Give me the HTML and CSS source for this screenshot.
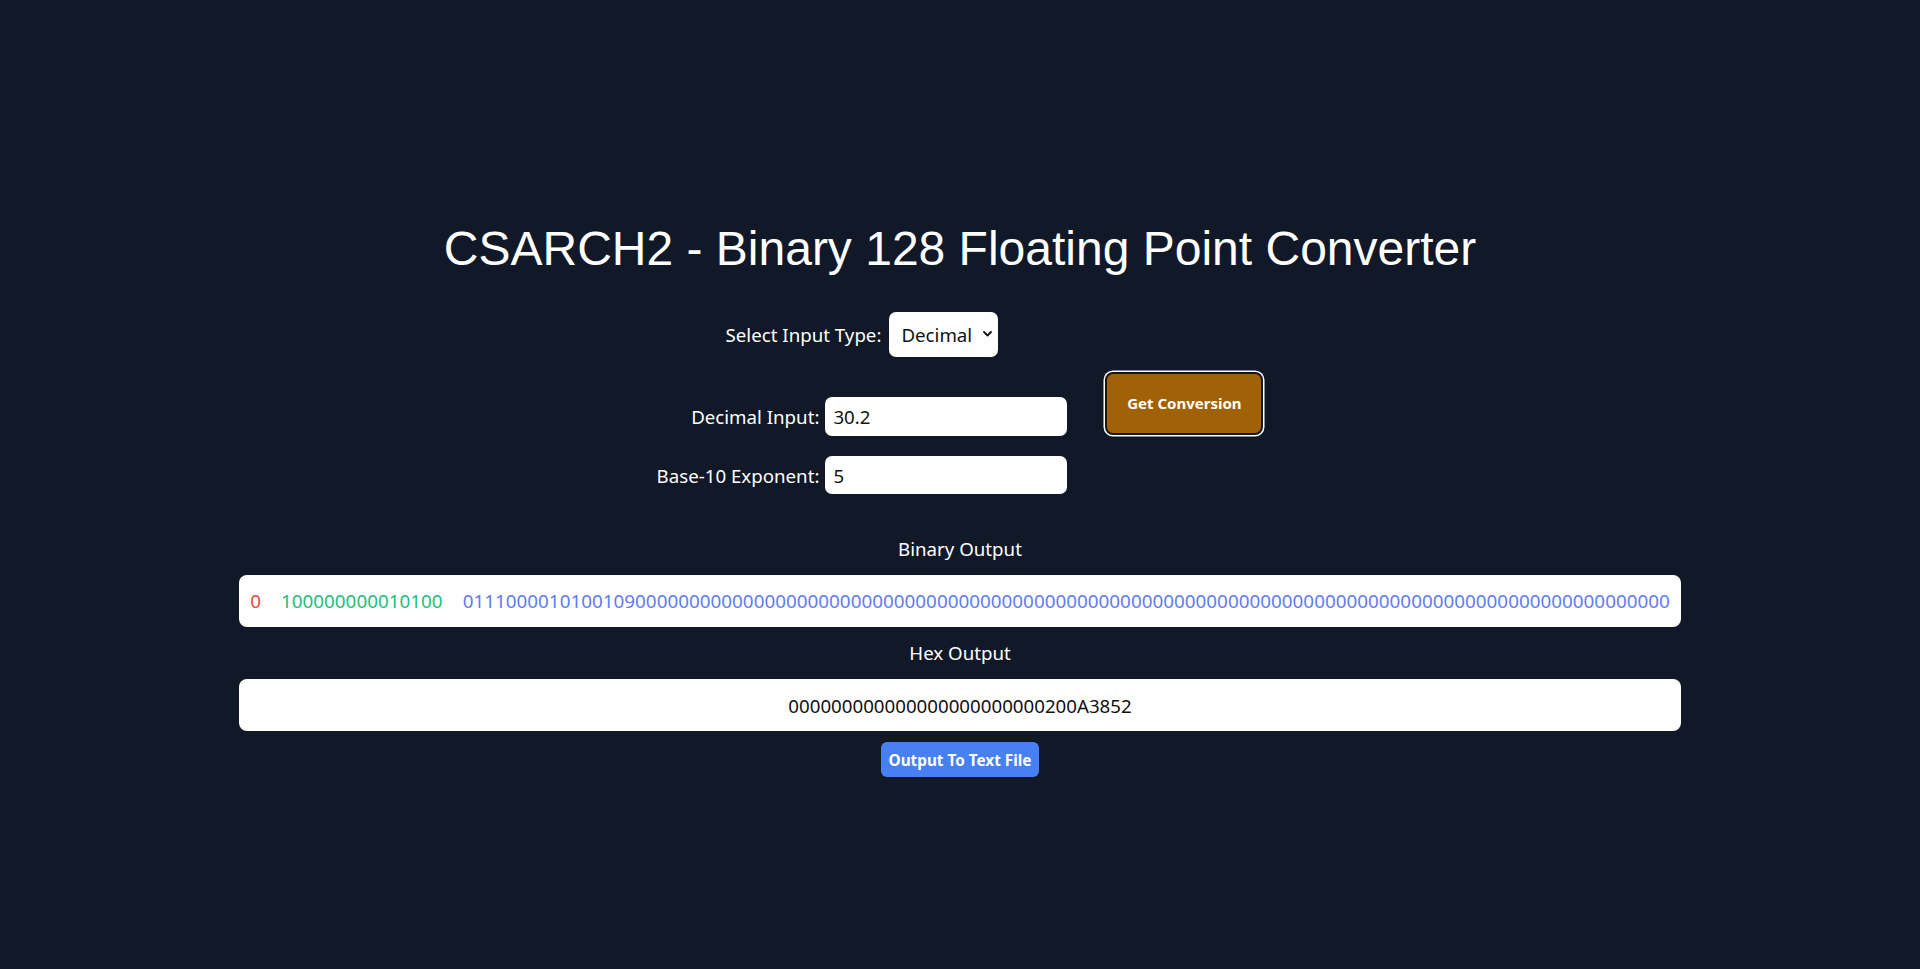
FILE: index.html
```html
<!DOCTYPE html>
<html lang="en">
<head>
<meta charset="utf-8">
<title>CSARCH2 - Binary 128 Floating Point Converter</title>
<link rel="stylesheet" href="styles.css">
</head>
<body>
<main class="page">
  <h1 class="title">CSARCH2 - Binary 128 Floating Point Converter</h1>
  <div class="controls">
    <div class="fields">
      <div class="type-row">
        <label class="field-label" for="type">Select Input Type:</label>
        <div class="select-wrap">
          <select id="type" class="type-select">
            <option>Decimal</option>
            <option>Binary</option>
          </select>
          <svg class="chevron" width="9" height="6" viewBox="0 0 9 6"><path d="M1 1l3.5 3.5L8 1" fill="none" stroke="#111" stroke-width="1.8" stroke-linecap="round" stroke-linejoin="round"/></svg>
        </div>
      </div>
      <div class="input-grid">
        <label class="field-label" for="dec">Decimal Input:</label>
        <input id="dec" class="text-input" type="text" value="30.2">
        <label class="field-label" for="exp">Base-10 Exponent:</label>
        <input id="exp" class="text-input short" type="text" value="5">
      </div>
    </div>
    <button class="convert">Get Conversion</button>
  </div>
  <section class="outputs">
    <div class="out-label">Binary Output</div>
    <div class="out-box binary"><span class="sign">0</span><span class="expo">100000000010100</span><span class="mant">0111000010100109000000000000000000000000000000000000000000000000000000000000000000000000000000000000000000000000</span></div>
    <div class="out-label">Hex Output</div>
    <div class="out-box hex">000000000000000000000000200A3852</div>
    <button class="export">Output To Text File</button>
  </section>
</main>
</body>
</html>
```
FILE: styles.css
```css
* { box-sizing: border-box; }
html, body { margin: 0; padding: 0; }
body {
  background: #111827;
  color: #ffffff;
  font-family: "Noto Sans", "Open Sans", sans-serif;
  min-height: 969px;
}
.page {
  display: flex;
  flex-direction: column;
  align-items: center;
  padding-top: 225px;
}
.title {
  margin: 0;
  font-family: "Liberation Sans", Arial, sans-serif;
  font-weight: 400;
  font-size: 48px;
  line-height: 48px;
  color: #ffffff;
}
.controls {
  margin-top: 39px;
  display: flex;
  align-items: center;
  gap: 38px;
}
.fields {
  display: flex;
  flex-direction: column;
  align-items: center;
  gap: 40px;
}
.type-row {
  display: flex;
  align-items: center;
  gap: 8px;
}
.field-label {
  font-size: 18.7px;
  color: #ffffff;
}
.select-wrap {
  position: relative;
}
.type-select {
  appearance: none;
  -webkit-appearance: none;
  display: block;
  width: 109px;
  height: 45px;
  border: none;
  border-radius: 7px;
  background: #ffffff;
  color: #111111;
  font-family: "Noto Sans", sans-serif;
  font-size: 18.7px;
  padding: 0 0 0 12px;
}
.chevron {
  position: absolute;
  right: 6px;
  top: 19px;
}
.input-grid {
  display: grid;
  grid-template-columns: auto auto;
  column-gap: 6px;
  row-gap: 20px;
  align-items: center;
}
.input-grid .field-label { justify-self: end; }
.text-input {
  width: 242px;
  height: 39px;
  border: none;
  border-radius: 7px;
  background: #ffffff;
  color: #111111;
  font-family: "Noto Sans", sans-serif;
  font-size: 18.7px;
  padding: 0 8px;
}
.text-input.short { height: 38px; }
.convert {
  width: 158px;
  height: 63px;
  background: #a16207;
  color: #ffffff;
  border: 2px solid #161616;
  border-radius: 8px;
  box-shadow: 0 0 0 1.5px #ffffff;
  font-family: "Noto Sans", sans-serif;
  font-weight: 700;
  font-size: 15px;
}
.outputs {
  margin-top: 41px;
  display: flex;
  flex-direction: column;
  align-items: center;
}
.out-label {
  font-size: 18.7px;
  line-height: 28px;
  color: #ffffff;
  margin-bottom: 12px;
}
.out-box {
  width: 1442px;
  height: 52px;
  background: #ffffff;
  border-radius: 8px;
  display: flex;
  align-items: center;
  justify-content: center;
  font-size: 18.7px;
  white-space: nowrap;
  margin-bottom: 12px;
}
.binary { font-size: 18.85px; }
.binary .sign { color: #ef4444; margin-right: 20px; }
.binary .expo { color: #1dc07c; margin-right: 20px; }
.binary .mant { color: #5f7cf4; }
.hex { color: #111111; margin-bottom: 11px; }
.export {
  height: 35px;
  padding: 0 8px;
  background: #4680f2;
  color: #ffffff;
  border: none;
  border-radius: 6px;
  font-family: "Noto Sans", sans-serif;
  font-weight: 700;
  font-size: 15.3px;
}
```
